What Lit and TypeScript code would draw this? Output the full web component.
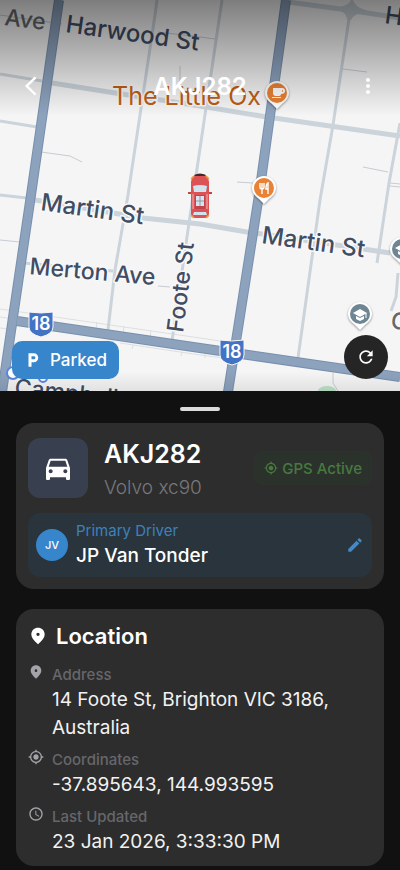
import { LitElement, html, svg, css } from "lit";
import { customElement, property } from "lit/decorators.js";

const ICONS: Record<string, string> = {
  car: "M18.92 6.01C18.72 5.42 18.16 5 17.5 5h-11c-.66 0-1.21.42-1.42 1.01L3 12v8c0 .55.45 1 1 1h1c.55 0 1-.45 1-1v-1h12v1c0 .55.45 1 1 1h1c.55 0 1-.45 1-1v-8l-2.08-5.99zM6.5 16c-.83 0-1.5-.67-1.5-1.5S5.67 13 6.5 13s1.5.67 1.5 1.5S7.33 16 6.5 16zm11 0c-.83 0-1.5-.67-1.5-1.5s.67-1.5 1.5-1.5 1.5.67 1.5 1.5-.67 1.5-1.5 1.5zM5 11l1.5-4.5h11L19 11H5z",
  target: "M12 8c-2.21 0-4 1.79-4 4s1.79 4 4 4 4-1.79 4-4-1.79-4-4-4zm8.94 3c-.46-4.17-3.77-7.48-7.94-7.94V1h-2v2.06C6.83 3.52 3.52 6.83 3.06 11H1v2h2.06c.46 4.17 3.77 7.48 7.94 7.94V23h2v-2.06c4.17-.46 7.48-3.77 7.94-7.94H23v-2h-2.06zM12 19c-3.87 0-7-3.13-7-7s3.13-7 7-7 7 3.13 7 7-3.13 7-7 7z",
  edit: "M3 17.25V21h3.75L17.81 9.94l-3.75-3.75L3 17.25zM20.71 7.04c.39-.39.39-1.02 0-1.41l-2.34-2.34c-.39-.39-1.02-.39-1.41 0l-1.83 1.83 3.75 3.75 1.83-1.83z",
  place: "M12 2C7.8 2 4 5.1 4 10.2c0 3.3 2.7 7.2 8 11.8 5.3-4.6 8-8.5 8-11.8C20 5.1 16.2 2 12 2zm0 10a2 2 0 1 1 0-4 2 2 0 0 1 0 4z",
  clock: "M11.99 2C6.47 2 2 6.48 2 12s4.47 10 9.99 10C17.52 22 22 17.52 22 12S17.52 2 11.99 2zM12 20c-4.42 0-8-3.58-8-8s3.58-8 8-8 8 3.58 8 8-3.58 8-8 8zm.5-13H11v6l5.25 3.15.75-1.23-4.5-2.67z",
  refresh: "M17.65 6.35C16.2 4.9 14.21 4 12 4c-4.42 0-7.99 3.58-7.99 8s3.57 8 7.99 8c3.73 0 6.84-2.55 7.73-6h-2.08c-.82 2.33-3.04 4-5.65 4-3.31 0-6-2.69-6-6s2.69-6 6-6c1.66 0 3.14.69 4.22 1.78L13 11h7V4l-2.35 2.35z",
  parking: "M13 3H6v18h4v-6h3c3.31 0 6-2.69 6-6s-2.69-6-6-6zm.2 8H10V7h3.2c1.1 0 2 .9 2 2s-.9 2-2 2z",
  back: "M15.6-.8 18 1.5 7.2 12 18 22.5l-2.4 2.3L2.6 12z",
  more: "M12 8c1.1 0 2-.9 2-2s-.9-2-2-2-2 .9-2 2 .9 2 2 2zm0 2c-1.1 0-2 .9-2 2s.9 2 2 2 2-.9 2-2-.9-2-2-2zm0 6c-1.1 0-2 .9-2 2s.9 2 2 2 2-.9 2-2-.9-2-2-2z",
};

const icon = (name: string, size: number) => html`
  <svg class="icon" width=${size} height=${size} viewBox="0 0 24 24" aria-hidden="true">
    <path d=${ICONS[name]} fill="currentColor"></path>
  </svg>
`;

@customElement("street-map")
export class StreetMap extends LitElement {
  static styles = css`
    :host { display: block; height: 100%; }
    .map { display: block; width: 100%; height: 100%; background: #f6f5f6; }
    .street, .lane, .thin, .rail { fill: none; stroke: #cbd4db; }
    .street { stroke-width: 5; }
    .lane { stroke-width: 3; }
    .thin { stroke-width: 1; stroke: #c5ccd2; }
    .rail { stroke-width: 1; stroke: #dcdfe2; }
    .edge { fill: none; stroke: #7890ad; stroke-width: 10; }
    .main { fill: none; stroke: #8da2bd; stroke-width: 8; }
    .label {
      font: 500 23px Inter, sans-serif;
      fill: #414d63;
      stroke: #f8f8f9;
      stroke-width: 3;
      stroke-linejoin: round;
      paint-order: stroke;
    }
    .major { font-size: 24px; }
    .top { stroke: none; }
    .grey { fill: #66686c; }
    .poi { font-size: 25px; font-weight: 400; fill: #bd5e17; }
    .route { font: 600 18px Inter, sans-serif; fill: #fff; text-anchor: middle; }
    .pin { fill: #fff; filter: drop-shadow(0 1px 1px #0006); }
  `;

  pin(x: number, y: number, color: string, glyph: unknown) {
    return svg`
      <g transform="translate(${x} ${y})">
        <path class="pin" d="M-12 0a12 12 0 1 1 24 0c0 6-5 9-8 12l-4 4-4-4c-3-3-8-6-8-12z"></path>
        <circle r="10" fill=${color}></circle>
        ${glyph}
      </g>`;
  }

  shield(x: number, y: number) {
    return svg`
      <g transform="translate(${x} ${y})">
        <path d="M-12-12Q0-10 12-12V3Q12 10 0 13-12 10-12 3z" fill="#4373c4" stroke="#f6f5f6"></path>
        <text class="route" y="6">18</text>
      </g>`;
  }

  render() {
    const cap = svg`
      <path d="M-7-1 0-5 7-1 0 3zM-4 2v3l4 2 4-2V2L0 4z" fill="#fff"></path>
      <path d="M6-1v5" stroke="#fff"></path>`;
    return html`
      <svg class="map" viewBox="0 0 400 391" preserveAspectRatio="xMidYMid slice" role="img" aria-label="Map of Brighton around Foote St">
        <path class="rail" d="M0 309 200 338M0 317l14 2M0 328l8 1M30 325l170 27M97 322l-1 7M124 326l-1 7M151 330l-1 7M120 343l80 12M133 345l-1 4M182 352l-1 4M200 338l20 3M200 355l24 3M205 352v6"></path>
        <path class="thin" d="M0 15 62 24M158 32l42 5 15 2M180 66v32M41 152l29 4 12 6M343 69l24 3M363 167l25 5M390 183l10 1M390 186l10 1M237 182l16 1M0 240l20 2M158 286l12 1M333 373v10l5 8"></path>
        <path class="lane" d="M0 74 42 81M0 121l37 6M0 195l27 3M23 263l90 8M157 0l-2 15-27 180-13 75-7 60M222 0l-24 162-10 68-17 118M400 123l-11 60-12 80M398 273l-2 24-5 14"></path>
        <path class="lane" d="M352 0l-1 9-2 10-16 106-13 75-22 158"></path>
        <path class="street" d="M52 83l76 12 72 11 67 11 133 19M288 2l60 8 52 8M35 200l108 18 57 6 47 8 23 3 120 18"></path>
        <path d="M334 7q10 1 16-5h4q3 6 12 8l-1 3q-11 0-14 7h-4q0-9-14-11z" fill="#cbd4db"></path>
        <ellipse cx="327" cy="391" rx="9" ry="5" fill="#bde3c9"></ellipse>
        <path class="edge" d="M17 321l183 27 200 29M59 0 31 195 2 392M286 0l-27 195-31 197"></path>
        <path class="main" d="M17 321l183 27 200 29M59 0 31 195 2 392M286 0l-27 195-31 197"></path>
        <circle cx="13" cy="373" r="6" fill="#fff" stroke="#5b86e0" stroke-width="2"></circle>
        <circle cx="43" cy="378" r="4" fill="#fff" stroke="#5b86e0" stroke-width="2"></circle>

        <text class="label grey top" transform="translate(4 25) rotate(7)">Ave</text>
        <text class="label major top" transform="translate(65 32) rotate(8)">Harwood St</text>
        <text class="label major top" transform="translate(384 23) rotate(8)">H</text>
        <text class="label major" transform="translate(40 210) rotate(8)">Martin St</text>
        <text class="label" transform="translate(29 274) rotate(5)">Merton Ave</text>
        <text class="label major" transform="translate(261 243) rotate(8)">Martin St</text>
        <text class="label" transform="translate(183 333) rotate(-83)">Foote St</text>
        <text class="label" transform="translate(14 395) rotate(6)">Campbell</text>
        <text class="label grey" transform="translate(390 328) rotate(8)">C</text>
        <text class="label poi" x="112" y="105">The Little Ox</text>

        ${this.shield(41, 324)} ${this.shield(232, 352)}
        ${this.pin(277, 93, "#e98235", svg`
          <path d="M-4-5h9q3 0 3 3t-4 3q0 2-3 2h-2q-3 0-3-3zM5-3v2q1 0 1-1t-1-1zM-5 4H4v1h-9z" fill="#fff" fill-rule="evenodd"></path>`)}
        ${this.pin(264, 188, "#e98235", svg`
          <path d="M-4-5v4q0 2 2 2t2-2v-4M-2-5V6M4 6V-5q-2 1-2 6h2" fill="none" stroke="#fff" stroke-width="1.4"></path>`)}
        ${this.pin(360, 314, "#6f8592", cap)}
        ${this.pin(402, 249, "#6f8592", cap)}

        <g transform="translate(190 174)">
          <path d="M2 3Q10-3 18 3l1 5v32q0 4-4 4H5q-4 0-4-4V8z" fill="#dd5355"></path>
          <path d="M4 1Q10-2 16 1l-1 1H5z" fill="#44282a"></path>
          <path d="M-2 19h3M19 19h3" stroke="#c8443f" stroke-width="2"></path>
          <path d="M3 12q7-2 14 0l-1 6H4zM4 38h12l1 3H3z" fill="#cfe4ef"></path>
          <path d="M3 20v15M17 20v15" stroke="#e9b9bb"></path>
          <path d="M5 21h10v14H5z" fill="#c0454a"></path>
          <path d="M6 22h8v10H6z" fill="#d8e5ee"></path>
          <path d="M6 27h8M10 22v10" stroke="#8d98a5"></path>
          <path d="M1 5l3-3M19 5l-3-3M1 41l3 3M19 41l-3 3" stroke="#f0a040" stroke-width="1.5"></path>
        </g>
      </svg>
    `;
  }
}

@customElement("location-row")
export class LocationRow extends LitElement {
  @property() icon = "place";
  @property() label = "";
  @property() value = "";

  static styles = css`
    :host { display: flex; gap: 8px; }
    .icon { flex: none; display: block; color: #a3a4a9; }
    .label { font-size: 15px; font-weight: 500; line-height: 22px; color: #66676b; }
    .value { margin: 0; font-size: 19px; line-height: 28px; color: #f2f2f2; }
    .pair { margin: 0; }
  `;

  render() {
    return html`
      ${icon(this.icon, 16)}
      <dl class="pair">
        <dt class="label">${this.label}</dt>
        <dd class="value">${this.value}</dd>
      </dl>
    `;
  }
}

@customElement("app-root")
export class AppRoot extends LitElement {
  static styles = css`
    :host {
      display: flex;
      flex-direction: column;
      min-height: 100vh;
      background: #111;
      color: #fff;
      font-family: Inter, sans-serif;
    }
    * { box-sizing: border-box; }
    button { padding: 0; border: 0; background: none; color: inherit; font: inherit; cursor: pointer; }
    .icon { display: block; flex: none; overflow: visible; }
    .hero { position: relative; height: round(down, 45vh, 1px); overflow: hidden; }
    .shade {
      position: absolute;
      inset: 0;
      pointer-events: none;
      background:
        linear-gradient(#0000007d, #00000048 50px, #0000 116px),
        linear-gradient(to top, #00000014, #0000 20px);
    }
    .bar {
      position: absolute;
      inset: 0 0 auto;
      padding-top: 58px;
      display: grid;
      grid-template-columns: 64px 1fr 64px;
      align-items: center;
    }
    .tool { display: grid; place-items: center; height: 56px; }
    .heading { margin: 0; text-align: center; font-size: 24px; font-weight: 600; }
    .status {
      position: absolute;
      left: 12px;
      bottom: 12px;
      display: flex;
      align-items: center;
      gap: 8px;
      height: 38px;
      padding: 0 12px;
      border-radius: 10px;
      background: #3786cc;
      font-size: 17px;
      font-weight: 500;
    }
    .refresh {
      position: absolute;
      right: 12px;
      bottom: 12px;
      display: grid;
      place-items: center;
      width: 44px;
      height: 44px;
      border-radius: 50%;
      background: #252525;
    }
    .panel { display: flex; flex-direction: column; gap: 20px; padding: 32px 16px 4px; position: relative; }
    .handle {
      position: absolute;
      top: 16px;
      left: calc(50% - 20px);
      width: 40px;
      height: 4px;
      border-radius: 2px;
      background: #dcdcdc;
    }
    .card { padding: 12px; border-radius: 18px; background: #2d2d2d; }
    .vehicle { display: flex; flex-direction: column; gap: 12px; }
    .summary { display: flex; align-items: center; height: 66px; gap: 16px; }
    .tile {
      display: grid;
      place-items: center;
      width: 60px;
      height: 60px;
      border-radius: 12px;
      background: #383f4f;
    }
    .names { flex: 1; padding-top: 4px; }
    .plate { margin: 0; font-size: 25px; font-weight: 600; line-height: 36px; }
    .model { margin: 0; font-size: 19px; font-weight: 300; line-height: 32px; color: #77787c; }
    .gps {
      display: flex;
      align-items: center;
      gap: 4px;
      height: 34px;
      padding: 0 10px;
      border-radius: 8px;
      background: #2b322c;
      color: #48793f;
      font-size: 15px;
      font-weight: 500;
    }
    .driver {
      display: flex;
      align-items: center;
      gap: 8px;
      height: 64px;
      padding: 0 8px;
      border-radius: 12px;
      background: #29343c;
    }
    .avatar {
      display: grid;
      place-items: center;
      width: 32px;
      height: 32px;
      border-radius: 50%;
      background: #3786cc;
      font-size: 11px;
      font-weight: 500;
    }
    .person { flex: 1; }
    .role { margin: 0; font-size: 15px; line-height: 22px; color: #3f81bb; }
    .name { margin: 0; font-size: 19px; font-weight: 500; line-height: 28px; }
    .edit { color: #4289ca; }
    .place { display: flex; flex-direction: column; gap: 7px; padding-bottom: 10px; }
    .title { display: flex; align-items: center; gap: 8px; margin: 0 0 6px; font-size: 22px; font-weight: 600; line-height: 30px; }
  `;

  render() {
    return html`
      <section class="hero">
        <street-map></street-map>
        <div class="shade"></div>
        <header class="bar">
          <button class="tool" aria-label="Back">${icon("back", 18)}</button>
          <h1 class="heading">AKJ282</h1>
          <button class="tool" aria-label="More options">${icon("more", 24)}</button>
        </header>
        <div class="status">${icon("parking", 18)}<span>Parked</span></div>
        <button class="refresh" aria-label="Refresh">${icon("refresh", 20)}</button>
      </section>
      <main class="panel">
        <div class="handle"></div>
        <section class="card vehicle">
          <div class="summary">
            <div class="tile">${icon("car", 32)}</div>
            <div class="names">
              <h2 class="plate">AKJ282</h2>
              <p class="model">Volvo xc90</p>
            </div>
            <div class="gps">${icon("target", 14)}<span>GPS Active</span></div>
          </div>
          <div class="driver">
            <div class="avatar">JV</div>
            <div class="person">
              <p class="role">Primary Driver</p>
              <p class="name">JP Van Tonder</p>
            </div>
            <button class="edit" aria-label="Edit driver">${icon("edit", 18)}</button>
          </div>
        </section>
        <section class="card place">
          <h2 class="title">${icon("place", 20)}<span>Location</span></h2>
          <location-row icon="place" label="Address" value="14 Foote St, Brighton VIC 3186, Australia"></location-row>
          <location-row icon="target" label="Coordinates" value="-37.895643, 144.993595"></location-row>
          <location-row icon="clock" label="Last Updated" value="23 Jan 2026, 3:33:30 PM"></location-row>
        </section>
      </main>
    `;
  }
}
